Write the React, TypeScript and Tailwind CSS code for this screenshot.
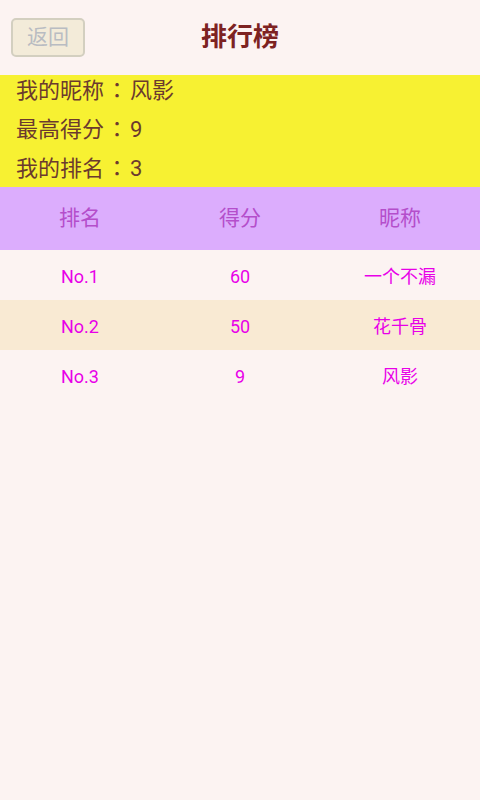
const rows = [
  { rank: "No.1", score: "60", name: "一个不漏", bg: "bg-[#fcf3f2]" },
  { rank: "No.2", score: "50", name: "花千骨", bg: "bg-[#f9ead3]" },
  { rank: "No.3", score: "9", name: "风影", bg: "bg-[#fcf3f2]" },
];

const Colon = () => (
  <span className="mx-[2px] font-['Noto_Sans_CJK_TC',sans-serif]">：</span>
);

export default function App() {
  return (
    <div className="w-[480px] h-[800px] bg-[#fcf3f2] font-['Roboto','Noto_Sans_CJK_SC',sans-serif]">
      {/* top bar */}
      <div className="relative h-[75px] flex items-center justify-center">
        <button className="absolute left-[11px] top-[18px] w-[74px] h-[39px] rounded-[5px] border-2 border-[#d3cfc0] bg-[#f3ebd9] text-[21px] text-[#b9bcc2] flex items-center justify-center">
          返回
        </button>
        <h1 className="text-[26px] font-bold text-[#7d2222]">排行榜</h1>
      </div>

      {/* my info */}
      <div className="h-[112px] bg-[#f7f132] px-4 pb-[6px] flex flex-col justify-center text-[22px] text-[#6b3a2e] leading-[37px]">
        <div>我的昵称<Colon />风影</div>
        <div>最高得分<Colon />9</div>
        <div>我的排名<Colon />3</div>
      </div>

      {/* table header */}
      <div className="h-[63px] bg-[#dcadfd] grid grid-cols-3 items-center text-center text-[21px] text-[#b44ecb]">
        <div>排名</div>
        <div>得分</div>
        <div>昵称</div>
      </div>

      {rows.map((r) => (
        <div
          key={r.rank}
          className={`h-[50px] ${r.bg} pt-[2px] grid grid-cols-3 items-center text-center text-[18px] text-[#e800e8]`}
        >
          <div>{r.rank}</div>
          <div>{r.score}</div>
          <div>{r.name}</div>
        </div>
      ))}
    </div>
  );
}
